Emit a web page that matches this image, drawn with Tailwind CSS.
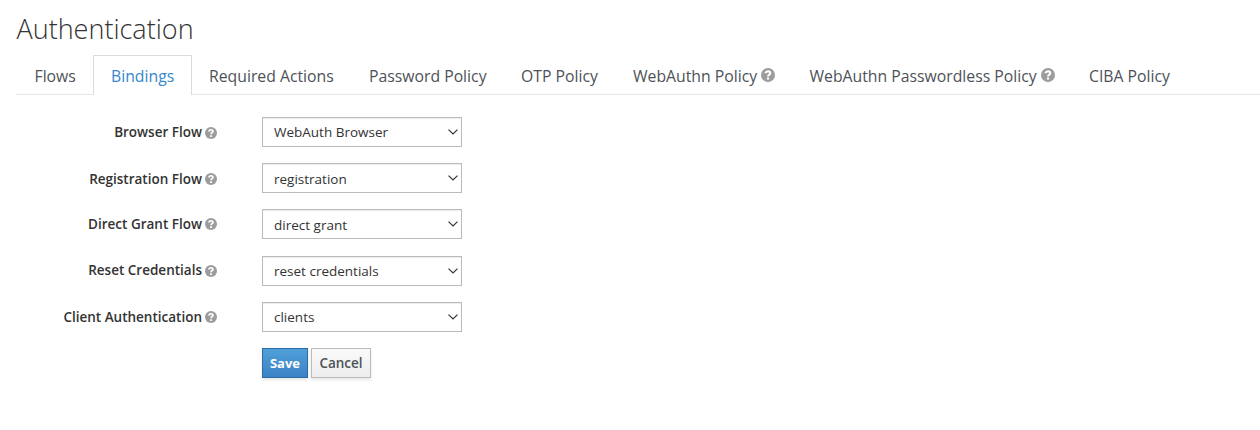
<!DOCTYPE html>
<html lang="en">
<head>
<meta charset="utf-8">
<title>Authentication</title>
<script src="https://cdn.jsdelivr.net/npm/@tailwindcss/browser@4"></script>
</head>
<body class="bg-white font-['Open_Sans',sans-serif] text-[#4d5258] w-[1260px] h-[430px] overflow-hidden">
<svg class="hidden"><symbol id="help" viewBox="0 0 14 14"><circle cx="7" cy="7" r="7" fill="#9c9c9c"/><path d="M4.3 5.2Q5.1 3.2 7 3.2Q9.3 3.3 9.3 5.1Q9.3 6.1 8.1 6.8Q7.1 7.4 7.1 8.5" fill="none" stroke="#fff" stroke-width="2"/><path d="M6 9.5h2.1v2.1H6z" fill="#fff"/></symbol>
<symbol id="chev" viewBox="0 0 10 6"><path d="M.5 .6L5 5L9.5 .6" fill="none" stroke="#333" stroke-width="1.2"/></symbol></svg>
<main class="pl-4">
<h1 class="pt-[11px] h-[55px] pl-[0.5px] text-[27px] leading-[36px] font-light text-[#333] whitespace-nowrap">Authentication</h1>
<nav class="flex h-10 border-b border-[#e6e6e6] text-[15.78px] leading-[40px] whitespace-nowrap">
<a class="w-[77px] pl-[18.5px] pt-px">Flows</a>
<a class="w-[99px] h-10 pl-[17px] pt-px border border-b-0 border-[#dcdcdc] bg-white text-[#3486cd] leading-[38px]">Bindings</a>
<a class="w-[160px] pl-[17px] pt-px">Required Actions</a>
<a class="w-[152px] pl-[17px] pt-px">Password Policy</a>
<a class="w-[112px] pl-[17px] pt-px">OTP Policy</a>
<a class="w-[177px] h-10 pl-[17px] flex items-center gap-1"><span class="pt-px">WebAuthn Policy</span><svg class="size-[14px]"><use href="#help"/></svg></a>
<a class="w-[279px] h-10 pl-[16.5px] flex items-center gap-1"><span class="pt-px">WebAuthn Passwordless Policy</span><svg class="size-[14px]"><use href="#help"/></svg></a>
<a class="pl-[17px] pt-px">CIBA Policy</a>
</nav>
<form class="pt-[22px] flex flex-col gap-[16.2px] text-[13.5px] text-[#333]">
<div class="flex items-center h-[30px]"><label class="w-[201px] mr-[45px] pt-px flex justify-end items-center gap-[3px] font-semibold">Browser Flow<svg class="size-[12px]"><use href="#help"/></svg></label><div class="w-[200px] h-[30px] border border-[#bbb] pl-[11px] pr-[3.5px] flex items-center justify-between shadow-[inset_0_1px_1px_rgba(0,0,0,.08)]"><span class="pt-px">WebAuth Browser</span><svg class="w-[10px] h-[6px]"><use href="#chev"/></svg></div></div>
<div class="flex items-center h-[30px]"><label class="w-[201px] mr-[45px] pt-px flex justify-end items-center gap-[3px] font-semibold">Registration Flow<svg class="size-[12px]"><use href="#help"/></svg></label><div class="w-[200px] h-[30px] border border-[#bbb] pl-[11px] pr-[3.5px] flex items-center justify-between shadow-[inset_0_1px_1px_rgba(0,0,0,.08)]"><span class="pt-0.5">registration</span><svg class="w-[10px] h-[6px]"><use href="#chev"/></svg></div></div>
<div class="flex items-center h-[30px]"><label class="w-[201px] mr-[45px] flex justify-end items-center gap-[3px] font-semibold">Direct Grant Flow<svg class="size-[12px]"><use href="#help"/></svg></label><div class="w-[200px] h-[30px] border border-[#bbb] pl-[11px] pr-[3.5px] flex items-center justify-between shadow-[inset_0_1px_1px_rgba(0,0,0,.08)]"><span class="pt-0.5">direct grant</span><svg class="w-[10px] h-[6px]"><use href="#chev"/></svg></div></div>
<div class="flex items-center h-[30px]"><label class="w-[201px] mr-[45px] flex justify-end items-center gap-[3px] font-semibold">Reset Credentials<svg class="size-[12px]"><use href="#help"/></svg></label><div class="w-[200px] h-[30px] border border-[#bbb] pl-[11px] pr-[3.5px] flex items-center justify-between shadow-[inset_0_1px_1px_rgba(0,0,0,.08)]"><span class="pt-px">reset credentials</span><svg class="w-[10px] h-[6px]"><use href="#chev"/></svg></div></div>
<div class="flex items-center h-[30px]"><label class="w-[201px] mr-[45px] pt-px flex justify-end items-center gap-[3px] font-semibold">Client Authentication<svg class="size-[12px]"><use href="#help"/></svg></label><div class="w-[200px] h-[30px] border border-[#bbb] pl-[11px] pr-[3.5px] flex items-center justify-between shadow-[inset_0_1px_1px_rgba(0,0,0,.08)]"><span class="pt-px">clients</span><svg class="w-[10px] h-[6px]"><use href="#chev"/></svg></div></div>
<div class="flex gap-[3px] pl-[246px] font-semibold"><button type="button" class="w-[46px] h-[30px] pt-px border border-[#2b6ca3] bg-linear-to-b from-[#509fda] to-[#3c83c5] font-bold text-[13px] text-white shadow-[0_2px_3px_rgba(0,0,0,.1)]">Save</button><button type="button" class="w-[60px] h-[30px] pt-px border border-[#bbb] bg-linear-to-b from-[#fafafa] to-[#ededed] text-[#4d5258] shadow-[0_2px_3px_rgba(0,0,0,.1)]">Cancel</button></div>
</form>
</main>
</body>
</html>
